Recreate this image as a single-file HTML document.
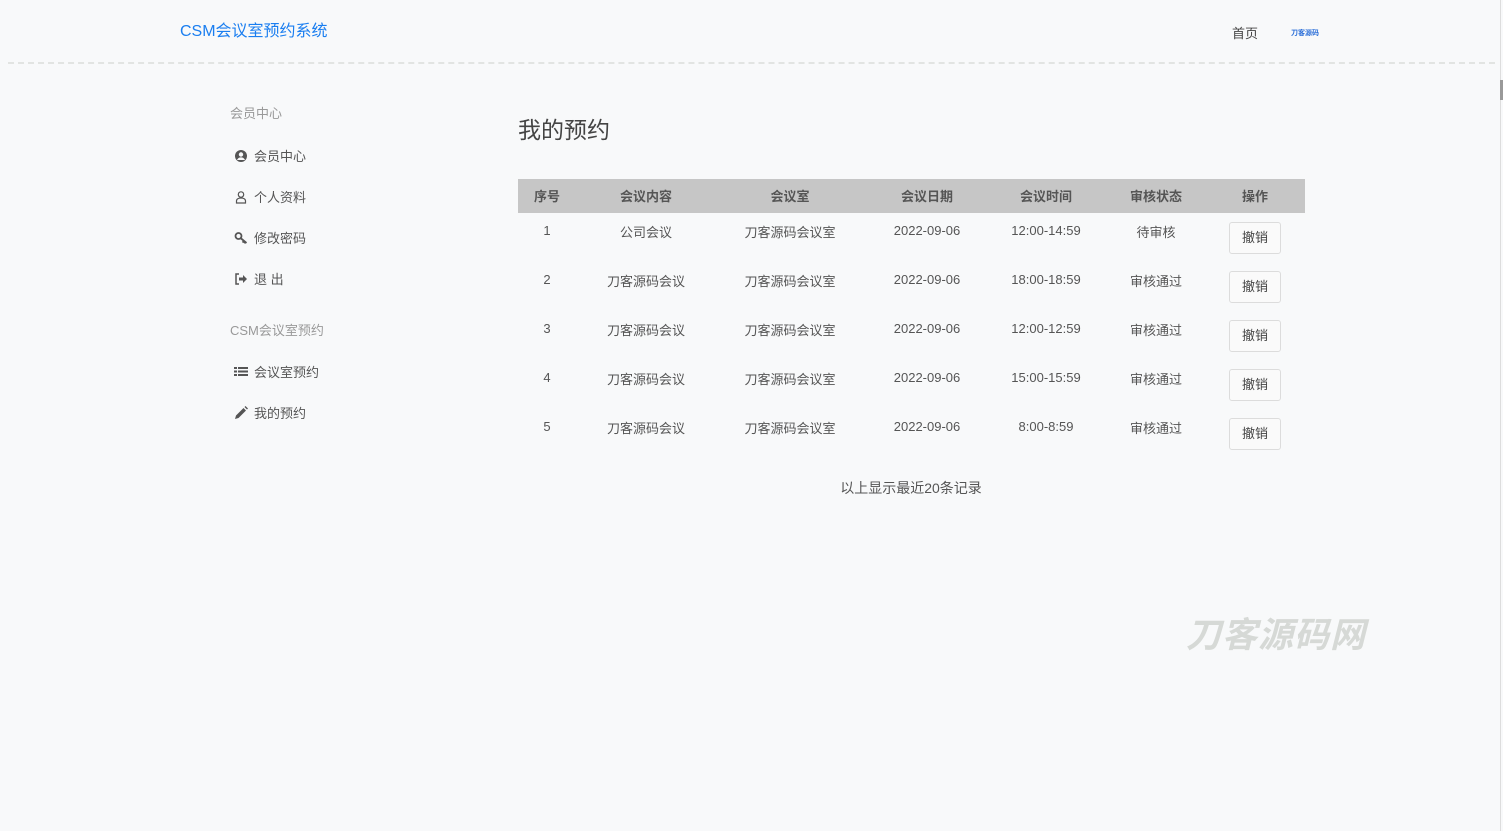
<!DOCTYPE html>
<html><head><meta charset="utf-8"><style>
body{margin:0;width:1503px;height:831px;background:#f8f9fa;font-family:"Liberation Sans","Noto Sans CJK SC",sans-serif;color:#555;position:relative;overflow:hidden}
.a{position:absolute;white-space:nowrap}
.c{transform:translateX(-50%)}
.hr{position:absolute;left:8px;width:1487px;top:62px;border-top:2px dashed #e2e4e2}
.th{position:absolute;left:518px;top:179px;width:787px;height:34px;background:#c6c6c6}
.btn{position:absolute;left:1229px;width:50px;height:30px;border:1px solid #dcdcdc;border-radius:3px;background:#fafafa;font-size:13px;line-height:30px;text-align:center;color:#444}
.s{font-size:13px;color:#555}
.sb{position:absolute;width:1px;left:1500px;top:0;height:831px;background:#ddd}
.m{font-size:13px}
.m svg{margin-right:6px}
</style></head><body>
<div class="a" style="left:180px;top:17px;font-size:16px;color:#1a7ef0">CSM会议室预约系统</div>
<div class="a" style="left:1232px;top:23px;font-size:13px;color:#444">首页</div>
<div class="a" style="left:1291px;top:28px;font-size:7px;font-weight:bold;color:#2a6ed8">刀客源码</div>
<div class="hr"></div>
<div class="sb"></div>
<div class="a" style="left:1500px;top:80px;width:3px;height:20px;background:#999"></div>

<div class="a s" style="left:230px;top:103px;color:#999">会员中心</div>
<div class="a m" style="left:234px;top:146px"><svg width="14" height="14" viewBox="0 0 14 14" style="vertical-align:-2px"><circle cx="7" cy="7" r="6" fill="#555"/><circle cx="7" cy="5.5" r="2.2" fill="#f8f9fa"/><path d="M3 11c1-2 2.5-2.6 4-2.6s3 .6 4 2.6" fill="#f8f9fa"/></svg>会员中心</div>
<div class="a m" style="left:234px;top:187px"><svg width="14" height="14" viewBox="0 0 14 14" style="vertical-align:-2px"><circle cx="7" cy="4.5" r="2.7" fill="none" stroke="#555" stroke-width="1.2"/><path d="M2.5 13v-2c0-2 2-3 4.5-3s4.5 1 4.5 3v2z" fill="none" stroke="#555" stroke-width="1.2"/></svg>个人资料</div>
<div class="a m" style="left:234px;top:228px"><svg width="14" height="14" viewBox="0 0 14 14" style="vertical-align:-2px"><circle cx="4.5" cy="5" r="3" fill="none" stroke="#555" stroke-width="1.8"/><path d="M6.5 7l6 5M10 10l-1.5 1.5M11.5 11l-1.2 1.2" stroke="#555" stroke-width="1.8"/></svg>修改密码</div>
<div class="a m" style="left:234px;top:269px"><svg width="14" height="14" viewBox="0 0 14 14" style="vertical-align:-2px"><path d="M5 2H2v10h3" fill="none" stroke="#555" stroke-width="1.5"/><path d="M5 5.5h4V3l4 4-4 4V8.5H5z" fill="#555"/></svg>退 出</div>
<div class="a s" style="left:230px;top:320px;color:#999">CSM会议室预约</div>
<div class="a m" style="left:234px;top:362px"><svg width="14" height="14" viewBox="0 0 14 14" style="vertical-align:-2px"><path d="M0 2h3v2H0zM4 2h10v2H4zM0 5.5h3v2H0zM4 5.5h10v2H4zM0 9h3v2H0zM4 9h10v2H4z" fill="#555"/></svg>会议室预约</div>
<div class="a m" style="left:234px;top:403px"><svg width="14" height="14" viewBox="0 0 14 14" style="vertical-align:-2px"><path d="M1 13l1-3.5 7.5-7.5 2.5 2.5-7.5 7.5z M10.5 1l1-1 2.5 2.5-1 1z" fill="#555"/></svg>我的预约</div>

<div class="a" style="left:518px;top:111px;font-size:23px;color:#444">我的预约</div>
<div class="th"></div>
<div class="a c" style="left:547px;top:186px;font-size:13px;font-weight:bold;color:#555">序号</div>
<div class="a c" style="left:646px;top:186px;font-size:13px;font-weight:bold;color:#555">会议内容</div>
<div class="a c" style="left:790px;top:186px;font-size:13px;font-weight:bold;color:#555">会议室</div>
<div class="a c" style="left:927px;top:186px;font-size:13px;font-weight:bold;color:#555">会议日期</div>
<div class="a c" style="left:1046px;top:186px;font-size:13px;font-weight:bold;color:#555">会议时间</div>
<div class="a c" style="left:1156px;top:186px;font-size:13px;font-weight:bold;color:#555">审核状态</div>
<div class="a c" style="left:1255px;top:186px;font-size:13px;font-weight:bold;color:#555">操作</div>

<div class="a c s" style="left:547px;top:223px">1</div><div class="a c s" style="left:646px;top:222px">公司会议</div><div class="a c s" style="left:790px;top:222px">刀客源码会议室</div><div class="a c s" style="left:927px;top:223px">2022-09-06</div><div class="a c s" style="left:1046px;top:223px">12:00-14:59</div><div class="a c s" style="left:1156px;top:222px">待审核</div><div class="btn" style="top:222px">撤销</div>
<div class="a c s" style="left:547px;top:272px">2</div><div class="a c s" style="left:646px;top:271px">刀客源码会议</div><div class="a c s" style="left:790px;top:271px">刀客源码会议室</div><div class="a c s" style="left:927px;top:272px">2022-09-06</div><div class="a c s" style="left:1046px;top:272px">18:00-18:59</div><div class="a c s" style="left:1156px;top:271px">审核通过</div><div class="btn" style="top:271px">撤销</div>
<div class="a c s" style="left:547px;top:321px">3</div><div class="a c s" style="left:646px;top:320px">刀客源码会议</div><div class="a c s" style="left:790px;top:320px">刀客源码会议室</div><div class="a c s" style="left:927px;top:321px">2022-09-06</div><div class="a c s" style="left:1046px;top:321px">12:00-12:59</div><div class="a c s" style="left:1156px;top:320px">审核通过</div><div class="btn" style="top:320px">撤销</div>
<div class="a c s" style="left:547px;top:370px">4</div><div class="a c s" style="left:646px;top:369px">刀客源码会议</div><div class="a c s" style="left:790px;top:369px">刀客源码会议室</div><div class="a c s" style="left:927px;top:370px">2022-09-06</div><div class="a c s" style="left:1046px;top:370px">15:00-15:59</div><div class="a c s" style="left:1156px;top:369px">审核通过</div><div class="btn" style="top:369px">撤销</div>
<div class="a c s" style="left:547px;top:419px">5</div><div class="a c s" style="left:646px;top:418px">刀客源码会议</div><div class="a c s" style="left:790px;top:418px">刀客源码会议室</div><div class="a c s" style="left:927px;top:419px">2022-09-06</div><div class="a c s" style="left:1046px;top:419px">8:00-8:59</div><div class="a c s" style="left:1156px;top:418px">审核通过</div><div class="btn" style="top:418px">撤销</div>

<div class="a c" style="left:911px;top:478px;font-size:14px;color:#555">以上显示最近20条记录</div>
<div class="a" style="left:1186px;top:607px;font-size:35px;font-weight:bold;font-style:italic;color:#d6d9d6;letter-spacing:1px">刀客源码网</div>
</body></html>
